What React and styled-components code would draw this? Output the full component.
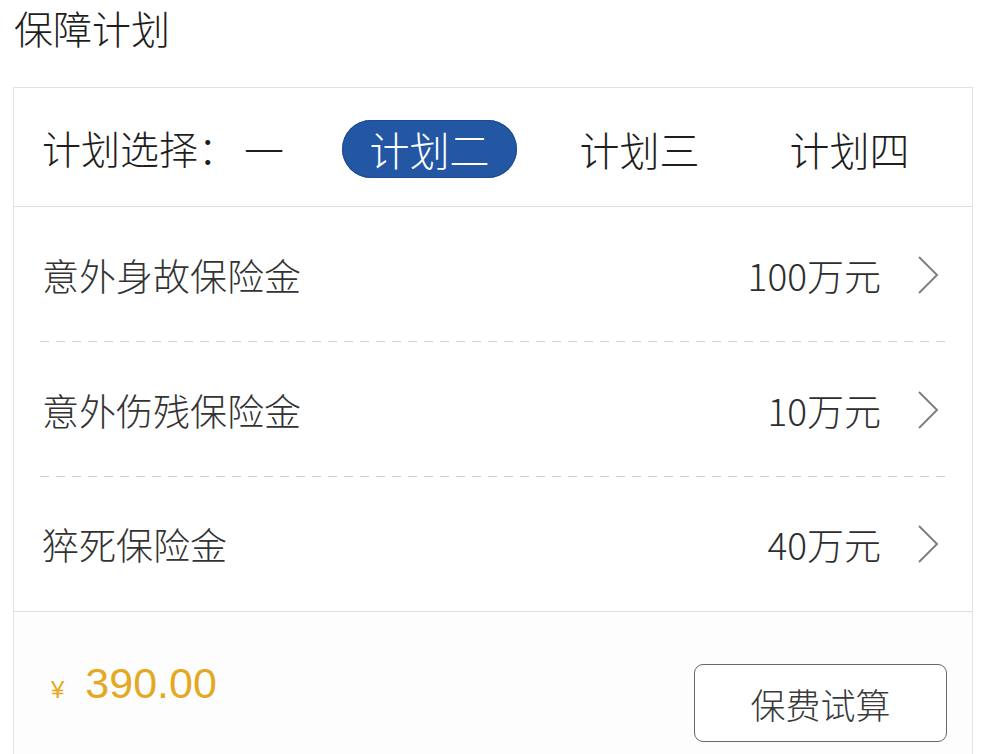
import React from 'react'
import styled, { createGlobalStyle } from 'styled-components'

const GlobalStyle = createGlobalStyle`
  html, body {
    margin: 0;
    padding: 0;
    background: #ffffff;
    font-family: "Noto Sans CJK SC", "Noto Sans", sans-serif;
    font-weight: 300;
  }
`

const Page = styled.div`
  width: 986px;
  height: 754px;
  overflow: hidden;
  padding-left: 13px;
  box-sizing: border-box;
`

const Title = styled.h1`
  margin: 0 0 33px 1px;
  font-size: 39px;
  line-height: 54px;
  font-weight: 300;
  color: #1e1e1e;
`

const Card = styled.div`
  width: 960px;
  box-sizing: border-box;
  border: 1px solid #e2e2e2;
  border-bottom: none;
  background: #fff;
`

const PlanBar = styled.div`
  display: flex;
  align-items: center;
  height: 118px;
  padding-left: 28px;
  border-bottom: 1px solid #e0e0e0;
`

const PlanLabel = styled.span`
  font-size: 39px;
  color: #1e1e1e;
  white-space: nowrap;
  margin-right: -16px;
`

const PlanOptions = styled.div`
  display: flex;
  align-items: center;
  gap: 35px;
  margin-top: 3px;
`

const PlanOption = styled.span`
  width: ${p => (p.compact ? '86px' : '175px')};
  height: 58px;
  line-height: 58px;
  text-align: center;
  border-radius: 29px;
  font-size: 40px;
  white-space: nowrap;
  color: ${p => (p.active ? '#fff' : '#1e1e1e')};
  background: ${p => (p.active ? '#2356a3' : 'transparent')};
  box-shadow: ${p => (p.active ? 'inset 0 0 0 1px #1d4b93' : 'none')};
`

const Rows = styled.div`
  padding: 0 26px;
`

const Row = styled.div`
  display: flex;
  align-items: center;
  height: ${p => (p.last ? '134px' : '135px')};
  padding: 0 7px 0 2px;
  background: ${p =>
    p.last
      ? 'none'
      : 'linear-gradient(to right, #cfcfcf 56%, transparent 0) left bottom / 16px 1px repeat-x'};
`

const RowLabel = styled.span`
  flex: 1;
  font-size: 37px;
  color: #333;
`

const RowValue = styled.span`
  font-size: 37px;
  color: #2e2e2e;
`

const Chevron = styled.svg`
  width: 22px;
  height: 40px;
  margin-left: 36px;
  flex-shrink: 0;
`

const Footer = styled.div`
  display: flex;
  justify-content: space-between;
  align-items: flex-start;
  height: 160px;
  padding: 52px 25px 0 37px;
  border-top: 1px solid #e0e0e0;
  background: #fdfdfd;
`

const Price = styled.div`
  display: flex;
  align-items: baseline;
  margin-top: -2px;
  color: #e5a823;
  font-family: "Liberation Sans", Arial, sans-serif;
  font-weight: 400;
`

const Yen = styled.span`
  font-size: 24px;
  margin-right: 21px;
`

const Amount = styled.span`
  font-size: 43px;
  line-height: 42px;
`

const CalcButton = styled.button`
  width: 253px;
  height: 78px;
  border: 1.5px solid #666;
  border-radius: 9px;
  background: #fff;
  font-family: "Noto Sans CJK SC", sans-serif;
  font-weight: 300;
  font-size: 35px;
  color: #3a3a3a;
  padding: 0;
`

const plans = ['一', '计划二', '计划三', '计划四']

const benefits = [
  { name: '意外身故保险金', amount: '100万元' },
  { name: '意外伤残保险金', amount: '10万元' },
  { name: '猝死保险金', amount: '40万元' },
]

const App = () => {
  return (
    <Page>
      <GlobalStyle />
      <Title>保障计划</Title>
      <Card>
        <PlanBar>
          <PlanLabel>计划选择：</PlanLabel>
          <PlanOptions>
            {plans.map((p, i) => (
              <PlanOption key={p} active={i === 1} compact={i === 0}>{p}</PlanOption>
            ))}
          </PlanOptions>
        </PlanBar>
        <Rows>
          {benefits.map((b, i) => (
            <Row key={b.name} last={i === benefits.length - 1}>
              <RowLabel>{b.name}</RowLabel>
              <RowValue>{b.amount}</RowValue>
              <Chevron viewBox="0 0 22 40">
                <polyline points="2,2 20,20 2,38" fill="none" stroke="#808080" strokeWidth="2" />
              </Chevron>
            </Row>
          ))}
        </Rows>
        <Footer>
          <Price>
            <Yen>¥</Yen>
            <Amount>390.00</Amount>
          </Price>
          <CalcButton>保费试算</CalcButton>
        </Footer>
      </Card>
    </Page>
  )
}

export default App
